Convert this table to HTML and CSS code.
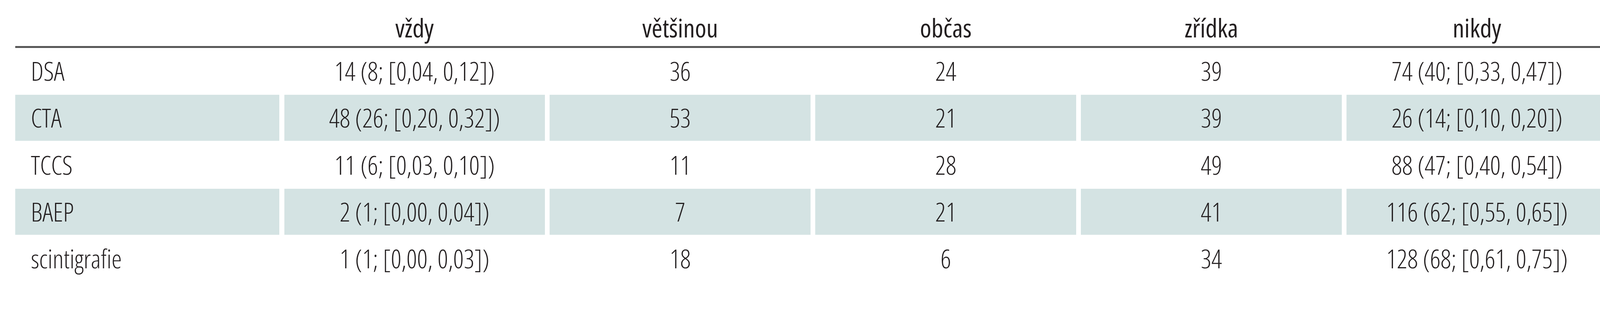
FILE: index.html
```html
<!DOCTYPE html>
<html lang="cs">
<head>
<meta charset="utf-8">
<title>Tabulka</title>
<link rel="stylesheet" href="styles.css">
</head>
<body>
<div class="table">
  <div class="row head">
    <div class="cell label"></div>
    <div class="cell">vždy</div>
    <div class="cell">většinou</div>
    <div class="cell">občas</div>
    <div class="cell">zřídka</div>
    <div class="cell last">nikdy</div>
  </div>
  <div class="body">
    <div class="row">
      <div class="cell label">DSA</div>
      <div class="cell">14 (8; [0,04, 0,12])</div>
      <div class="cell">36</div>
      <div class="cell">24</div>
      <div class="cell">39</div>
      <div class="cell last">74 (40; [0,33, 0,47])</div>
    </div>
    <div class="row alt">
      <div class="cell label">CTA</div>
      <div class="cell">48 (26; [0,20, 0,32])</div>
      <div class="cell">53</div>
      <div class="cell">21</div>
      <div class="cell">39</div>
      <div class="cell last">26 (14; [0,10, 0,20])</div>
    </div>
    <div class="row">
      <div class="cell label">TCCS</div>
      <div class="cell">11 (6; [0,03, 0,10])</div>
      <div class="cell">11</div>
      <div class="cell">28</div>
      <div class="cell">49</div>
      <div class="cell last">88 (47; [0,40, 0,54])</div>
    </div>
    <div class="row alt">
      <div class="cell label">BAEP</div>
      <div class="cell">2 (1; [0,00, 0,04])</div>
      <div class="cell">7</div>
      <div class="cell">21</div>
      <div class="cell">41</div>
      <div class="cell last">116 (62; [0,55, 0,65])</div>
    </div>
    <div class="row">
      <div class="cell label">scintigrafie</div>
      <div class="cell">1 (1; [0,00, 0,03])</div>
      <div class="cell">18</div>
      <div class="cell">6</div>
      <div class="cell">34</div>
      <div class="cell last">128 (68; [0,61, 0,75])</div>
    </div>
  </div>
</div>
</body>
</html>
```

FILE: styles.css
```css
:root {
  --u: calc(100vw / 4307);
}

html, body {
  margin: 0;
  padding: 0;
  background: #ffffff;
  overflow: hidden;
}

.table {
  padding-left: calc(41 * var(--u));
  color: #231f20;
  font-family: "Open Sans", "Liberation Sans Narrow", "Liberation Sans", sans-serif;
  font-stretch: 87.5%;
  font-size: calc(70 * var(--u));
  line-height: 1.2;
}

.row {
  display: grid;
  grid-template-columns: calc(711 * var(--u)) repeat(4, calc(702 * var(--u))) calc(682 * var(--u));
  column-gap: calc(13 * var(--u));
}

.head {
  height: calc(124 * var(--u));
  border-bottom: calc(6 * var(--u)) solid #575757;
  font-weight: 400;
}

.body {
  display: flex;
  flex-direction: column;
  gap: calc(2.5 * var(--u));
}

.body .row {
  height: calc(124 * var(--u));
  font-weight: 300;
}

.cell {
  display: flex;
  align-items: center;
  justify-content: center;
  white-space: nowrap;
}

.head .cell {
  align-items: flex-end;
  padding-bottom: calc(7 * var(--u));
}

.cell.label {
  justify-content: flex-start;
  padding-left: calc(42 * var(--u));
}

.cell.last {
  padding-left: calc(20 * var(--u));
}

.row.alt .cell {
  background: #d4e3e3;
}
```
